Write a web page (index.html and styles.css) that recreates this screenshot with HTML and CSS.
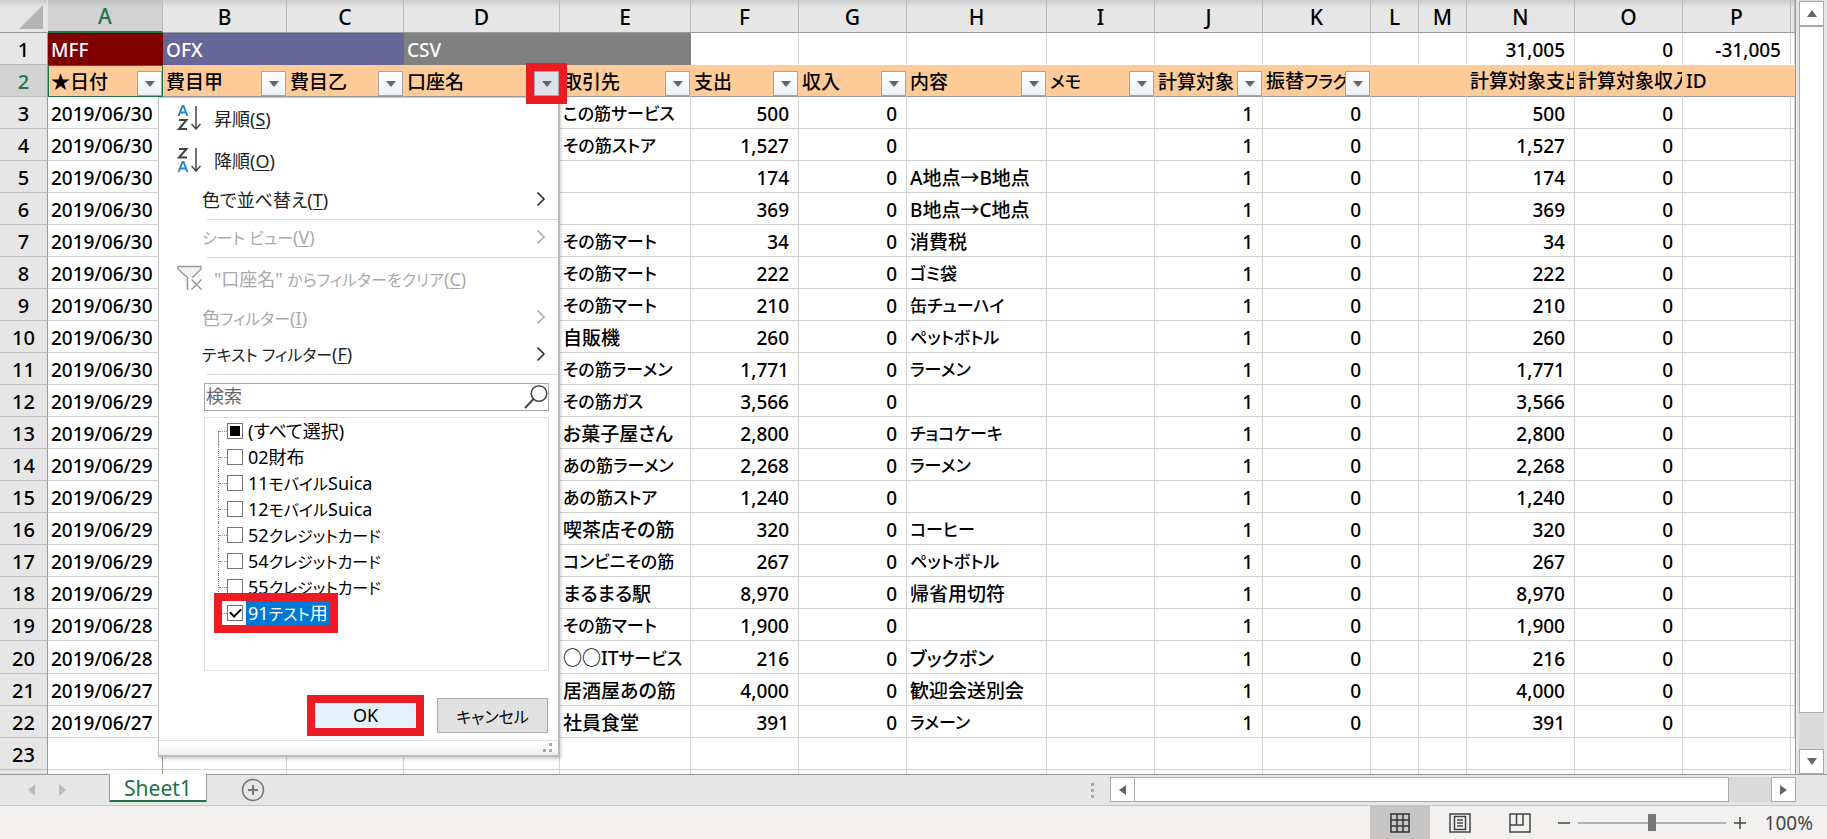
FILE: index.html
```html
<!DOCTYPE html>
<html lang="ja">
<head>
<meta charset="utf-8">
<title>Sheet1</title>
<link rel="stylesheet" href="styles.css">
</head>
<body>
<svg class="defs" aria-hidden="true">
  <symbol id="chev" viewBox="0 0 10 16"><path d="M1.500 1.500 8 8 1.500 14.500" fill="none" stroke="currentColor" stroke-width="1.500"/></symbol>
  <symbol id="az-arrow" viewBox="0 0 10 24"><path d="M5 0V23M0.500 18 5 23 9.500 18" fill="none" stroke="#444" stroke-width="1.500"/></symbol>
</svg>
<main class="workspace">
  <div class="sheet">
    <table class="grid">
      <colgroup><col class="w-row"><col class="w-a"><col class="w-b"><col class="w-c"><col class="w-d"><col class="w-e"><col class="w-m"><col class="w-m"><col class="w-h"><col class="w-m"><col class="w-m"><col class="w-m"><col class="w-s"><col class="w-s"><col class="w-m"><col class="w-m"><col class="w-m"><col></colgroup>
      <thead>
        <tr><th class="corner"><svg width="26" height="26" viewBox="0 0 26 26"><path d="M25 1V25H1Z" fill="#b4b4b4"/></svg></th><th class="active">A</th><th>B</th><th>C</th><th>D</th><th>E</th><th>F</th><th>G</th><th>H</th><th>I</th><th>J</th><th>K</th><th>L</th><th>M</th><th>N</th><th>O</th><th>P</th><th></th></tr>
      </thead>
      <tbody>
        <tr class="groups"><th>1</th><td class="mff">MFF</td><td class="ofx">OFX</td><td class="ofx"></td><td class="csv">CSV</td><td class="csv"></td><td></td><td></td><td></td><td></td><td></td><td></td><td></td><td></td><td>31,005</td><td>0</td><td>-31,005</td><td></td></tr>
        <tr class="fields"><th class="active">2</th>
          <td class="current"><div class="field"><span>★日付</span><button class="drop" aria-label="★日付"></button></div></td>
          <td><div class="field"><span>費目甲</span><button class="drop" aria-label="費目甲"></button></div></td>
          <td><div class="field"><span>費目乙</span><button class="drop" aria-label="費目乙"></button></div></td>
          <td><div class="field"><span>口座名</span><button class="drop open" aria-label="口座名"></button></div></td>
          <td><div class="field"><span>取引先</span><button class="drop" aria-label="取引先"></button></div></td>
          <td><div class="field"><span>支出</span><button class="drop" aria-label="支出"></button></div></td>
          <td><div class="field"><span>収入</span><button class="drop" aria-label="収入"></button></div></td>
          <td><div class="field"><span>内容</span><button class="drop" aria-label="内容"></button></div></td>
          <td><div class="field"><span class="kana">メモ</span><button class="drop" aria-label="メモ"></button></div></td>
          <td><div class="field"><span>計算対象</span><button class="drop" aria-label="計算対象"></button></div></td>
          <td><div class="field"><span>振替<small>フラグ</small></span><button class="drop" aria-label="振替フラグ"></button></div></td>
          <td></td><td></td><td>計算対象支出</td><td>計算対象収入</td><td>ID</td><td></td></tr>
        <tr><th>3<td>2019/06/30<td><td><td><td class="kana">この筋サービス<td>500<td>0<td><td><td>1<td>0<td><td><td>500<td>0<td><td></tr>
        <tr><th>4<td>2019/06/30<td><td><td><td class="kana">その筋ストア<td>1,527<td>0<td><td><td>1<td>0<td><td><td>1,527<td>0<td><td></tr>
        <tr><th>5<td>2019/06/30<td><td><td><td><td>174<td>0<td>A地点→B地点<td><td>1<td>0<td><td><td>174<td>0<td><td></tr>
        <tr><th>6<td>2019/06/30<td><td><td><td><td>369<td>0<td>B地点→C地点<td><td>1<td>0<td><td><td>369<td>0<td><td></tr>
        <tr><th>7<td>2019/06/30<td><td><td><td class="kana">その筋マート<td>34<td>0<td>消費税<td><td>1<td>0<td><td><td>34<td>0<td><td></tr>
        <tr><th>8<td>2019/06/30<td><td><td><td class="kana">その筋マート<td>222<td>0<td class="kana">ゴミ袋<td><td>1<td>0<td><td><td>222<td>0<td><td></tr>
        <tr><th>9<td>2019/06/30<td><td><td><td class="kana">その筋マート<td>210<td>0<td class="kana">缶チューハイ<td><td>1<td>0<td><td><td>210<td>0<td><td></tr>
        <tr><th>10<td>2019/06/30<td><td><td><td>自販機<td>260<td>0<td class="kana">ペットボトル<td><td>1<td>0<td><td><td>260<td>0<td><td></tr>
        <tr><th>11<td>2019/06/30<td><td><td><td class="kana">その筋ラーメン<td>1,771<td>0<td class="kana">ラーメン<td><td>1<td>0<td><td><td>1,771<td>0<td><td></tr>
        <tr><th>12<td>2019/06/29<td><td><td><td class="kana">その筋ガス<td>3,566<td>0<td><td><td>1<td>0<td><td><td>3,566<td>0<td><td></tr>
        <tr><th>13<td>2019/06/29<td><td><td><td>お菓子屋さん<td>2,800<td>0<td class="kana">チョコケーキ<td><td>1<td>0<td><td><td>2,800<td>0<td><td></tr>
        <tr><th>14<td>2019/06/29<td><td><td><td class="kana">あの筋ラーメン<td>2,268<td>0<td class="kana">ラーメン<td><td>1<td>0<td><td><td>2,268<td>0<td><td></tr>
        <tr><th>15<td>2019/06/29<td><td><td><td class="kana">あの筋ストア<td>1,240<td>0<td><td><td>1<td>0<td><td><td>1,240<td>0<td><td></tr>
        <tr><th>16<td>2019/06/29<td><td><td><td>喫茶店その筋<td>320<td>0<td class="kana">コーヒー<td><td>1<td>0<td><td><td>320<td>0<td><td></tr>
        <tr><th>17<td>2019/06/29<td><td><td><td class="kana">コンビニその筋<td>267<td>0<td class="kana">ペットボトル<td><td>1<td>0<td><td><td>267<td>0<td><td></tr>
        <tr><th>18<td>2019/06/29<td><td><td><td>まるまる駅<td>8,970<td>0<td>帰省用切符<td><td>1<td>0<td><td><td>8,970<td>0<td><td></tr>
        <tr><th>19<td>2019/06/28<td><td><td><td class="kana">その筋マート<td>1,900<td>0<td><td><td>1<td>0<td><td><td>1,900<td>0<td><td></tr>
        <tr><th>20<td>2019/06/28<td><td><td><td>○○IT<small>サービス</small><td>216<td>0<td>ブックボン<td><td>1<td>0<td><td><td>216<td>0<td><td></tr>
        <tr><th>21<td>2019/06/27<td><td><td><td>居酒屋あの筋<td>4,000<td>0<td>歓迎会送別会<td><td>1<td>0<td><td><td>4,000<td>0<td><td></tr>
        <tr><th>22<td>2019/06/27<td><td><td><td>社員食堂<td>391<td>0<td class="kana">ラメーン<td><td>1<td>0<td><td><td>391<td>0<td><td></tr>
        <tr><th>23<td><td><td><td><td><td><td><td><td><td><td><td><td><td><td><td></tr>
        <tr><th><td><td><td><td><td><td><td><td><td><td><td><td><td><td><td><td></tr>
      </tbody>
    </table>

    <section class="menu">
      <button class="item tall"><svg class="icon" width="26" height="26" viewBox="0 0 26 26"><path d="M1.500 11 5.500 1h1L10.500 11M3 7.500h6" fill="none" stroke="#2b88c8" stroke-width="2"/><path d="M2 15h7.500L2 24h8" fill="none" stroke="#444" stroke-width="2"/><use href="#az-arrow" x="14" y="1" width="10" height="24"/></svg><span>昇順(<u>S</u>)</span></button>
      <button class="item tall"><svg class="icon" width="26" height="26" viewBox="0 0 26 26"><path d="M2 2h7.500L2 10.500h8" fill="none" stroke="#444" stroke-width="2"/><path d="M1.500 25 5.500 15h1L10.500 25M3 21.500h6" fill="none" stroke="#2b88c8" stroke-width="2"/><use href="#az-arrow" x="14" y="1" width="10" height="24"/></svg><span>降順(<u>O</u>)</span></button>
      <button class="item"><span>色で並べ替え(<u>T</u>)</span><svg class="chev" width="10" height="16"><use href="#chev"/></svg></button>
      <hr>
      <button class="item" disabled><span><small>シート ビュー</small>(<u>V</u>)</span><svg class="chev" width="10" height="16"><use href="#chev"/></svg></button>
      <hr>
      <button class="item tall" disabled><svg class="icon" width="26" height="26" viewBox="0 0 26 26"><path d="M1 1.500H24V4L15.500 12.500V13M10.500 25V12.500L1 4V1.500" fill="#f2f2f2" stroke="#999" stroke-width="1.500"/><path d="M14.500 14.500 24.500 24.500M24.500 14.500 14.500 24.500" stroke="#999" stroke-width="1.500"/></svg><span>"口座名" <small>からフィルターをクリア</small>(<u>C</u>)</span></button>
      <button class="item" disabled><span>色<small>フィルター</small>(<u>I</u>)</span><svg class="chev" width="10" height="16"><use href="#chev"/></svg></button>
      <button class="item"><span><small>テキスト フィルター</small>(<u>F</u>)</span><svg class="chev" width="10" height="16"><use href="#chev"/></svg></button>
      <hr>
      <div class="panel">
        <div class="search">
          <input type="text" placeholder="検索" aria-label="検索">
          <svg width="24" height="26" viewBox="0 0 24 26"><circle cx="15" cy="9.500" r="7.800" fill="none" stroke="#444" stroke-width="1.500"/><path d="M9.500 15 1 24" stroke="#444" stroke-width="2"/></svg>
        </div>
        <div class="tree">
          <label><input type="checkbox" class="mixed"><span>(すべて選択)</span></label>
          <label><input type="checkbox"><span>02財布</span></label>
          <label><input type="checkbox"><span>11<small>モバイル</small>Suica</span></label>
          <label><input type="checkbox"><span>12<small>モバイル</small>Suica</span></label>
          <label><input type="checkbox"><span>52<small>クレジットカード</small></span></label>
          <label><input type="checkbox"><span>54<small>クレジットカード</small></span></label>
          <label><input type="checkbox"><span>55<small>クレジットカード</small></span></label>
          <label class="marked"><input type="checkbox" checked><span>91<small>テスト</small>用</span></label>
        </div>
        <div class="actions"><button class="ok">OK</button><button class="cancel"><small>キャンセル</small></button></div>
      </div>
      <div class="grip"><svg width="10" height="10" viewBox="0 0 10 10"><path d="M6 0h3v3H6zM0 6h3v3H0zM6 6h3v3H6z" fill="#aaa"/></svg></div>
    </section>
  </div>
  <div class="vscroll">
    <button aria-label="上"><svg width="10" height="7"><path d="M5 0 10 7H0Z" fill="#666"/></svg></button>
    <div class="vthumb"></div><div class="vtrack"></div>
    <button aria-label="下"><svg width="10" height="7"><path d="M0 0H10L5 7Z" fill="#666"/></svg></button>
  </div>
</main>
<nav class="tabs">
  <button class="step" aria-label="前"><svg width="7" height="12"><path d="M7 0V12L0 6Z" fill="#bbb"/></svg></button>
  <button class="step" aria-label="次"><svg width="7" height="12"><path d="M0 0V12L7 6Z" fill="#bbb"/></svg></button>
  <button class="tab">Sheet1</button>
  <button class="add" aria-label="追加"><svg width="24" height="24" viewBox="0 0 24 24"><circle cx="12" cy="12" r="10.500" fill="none" stroke="#777" stroke-width="1.500"/><path d="M7 12H17M12 7V17" stroke="#777" stroke-width="2"/></svg></button>
  <svg class="dots" width="4" height="16"><path d="M0 0h3v3H0zM0 6h3v3H0zM0 12h3v3H0z" fill="#aaa"/></svg>
  <div class="hscroll">
    <button aria-label="左"><svg width="7" height="10"><path d="M7 0V10L0 5Z" fill="#666"/></svg></button>
    <div class="hthumb"></div><div class="htrack"></div>
    <button aria-label="右"><svg width="7" height="10"><path d="M0 0V10L7 5Z" fill="#666"/></svg></button>
  </div>
</nav>
<footer class="status">
  <button class="view on" aria-label="標準"><svg width="20" height="20" viewBox="0 0 20 20"><path d="M1 1H19V19H1ZM7 1V19M13 1V19M1 7H19M1 13H19" fill="none" stroke="#333" stroke-width="1.500"/></svg></button>
  <button class="view" aria-label="ページ レイアウト"><svg width="22" height="20" viewBox="0 0 22 20"><path d="M1 1H21V19H1ZM5.500 3.500H16.500V16.500H5.500ZM8 7H14M8 10H14M8 13H14" fill="none" stroke="#444" stroke-width="1.500"/></svg></button>
  <button class="view" aria-label="改ページ"><svg width="22" height="20" viewBox="0 0 22 20"><path d="M1 1H21V19H1ZM7.500 1V12M1 12H14V1" fill="none" stroke="#444" stroke-width="1.500"/></svg></button>
  <button class="zoom" aria-label="縮小"><svg width="12" height="12"><path d="M0 6H12" stroke="#444" stroke-width="1.500"/></svg></button>
  <input class="slider" type="range" min="0" max="100" value="50" aria-label="ズーム">
  <button class="zoom" aria-label="拡大"><svg width="12" height="12"><path d="M0 6H12M6 0V12" stroke="#444" stroke-width="1.500"/></svg></button>
  <span class="pct">100%</span>
</footer>
</body>
</html>
```
FILE: styles.css
```css
* { box-sizing: border-box; }
html, body { height: 100%; }
body {
  margin: 0; display: flex; flex-direction: column; overflow: hidden;
  background: #e6e6e6; color: #000;
  font-family: "Noto Sans", "Noto Sans CJK JP", sans-serif;
  font-size: 18px; font-feature-settings: "palt";
}
button, input { font: inherit; font-feature-settings: inherit; color: inherit; margin: 0; padding: 0; }
button { border: 0; background: none; }
small { font-size: 16px; }
.defs { position: absolute; width: 0; height: 0; }

.workspace { flex: 1; min-height: 0; display: flex; gap: 3px; padding-right: 3px; }
.sheet { flex: 1; min-width: 0; position: relative; overflow: hidden; background: #fff; border-right: 1px solid #999; }

.grid { width: 100%; table-layout: fixed; border-collapse: separate; border-spacing: 0; font-size: 19px; font-weight: 500; }
.w-row { width: 48px; } .w-a { width: 115px; } .w-b { width: 124px; } .w-c { width: 117px; }
.w-d { width: 156px; } .w-e { width: 131px; } .w-m { width: 108px; } .w-h { width: 140px; } .w-s { width: 48px; }
.grid td, .grid th { height: 32px; padding: 3px 0 0; line-height: 28px; white-space: nowrap; overflow: hidden; }
.grid td { padding-left: 3px; border-right: 1px solid #d4d4d4; border-bottom: 1px solid #d0d0d0; }
.grid th { background: #e6e6e6; font-weight: 500; font-size: 20px; border-right: 1px solid #999; border-bottom: 1px solid #bbb; }
.grid thead th { height: 33px; padding-top: 1px; line-height: 30px; font-size: 21px; border-right-color: #bbb; border-bottom-color: #999; background: linear-gradient(#cccccc, #e6e6e6 7px); }
.grid thead th.active { background: linear-gradient(#bdbdbd, #d2d2d2 7px); color: #217346; border-bottom: 2px solid #217346; }
.grid thead .corner { padding-right: 3px; border-right-color: #e6e6e6; }
.corner svg { display: block; margin-left: auto; }
.grid tbody th.active { background: #d2d2d2; color: #217346; }
.grid td:nth-child(7), .grid td:nth-child(8), .grid td:nth-child(11), .grid td:nth-child(12),
.grid td:nth-child(15), .grid td:nth-child(16), .grid td:nth-child(17) { text-align: right; padding-left: 0; padding-right: 9px; }
.grid td:nth-child(2) { border-right-color: #999; }
.grid .kana, .grid small { font-size: 17px; }
.grid .groups td { border-bottom-color: #fff; }
.grid .groups .mff { background: #800000; border-color: #800000; color: #fff; }
.grid .groups .ofx { background: #666699; border-color: #666699; color: #fff; }
.grid .groups .csv { background: #808080; border-color: #808080; color: #fff; }
.grid .fields td { background: #ffcc99; border-right-color: #ffcc99; border-bottom-color: #999; text-align: left; padding: 0 0 0 3px; }
.grid .fields .current { border-right-color: #217346; border-bottom-color: #217346; box-shadow: inset 1px 1px #217346; }
.field { display: flex; align-items: flex-end; height: 31px; }
.field span { flex: 1; min-width: 0; overflow: hidden; }
.drop {
  flex: none; width: 25px; height: 25px; border: 1px solid #a0a6ae;
  background: linear-gradient(#fff, #eef1f7); display: grid; place-items: center;
}
.drop::before { content: ""; border: 5px solid transparent; border-top: 6px solid #666; border-bottom: 0; }
.drop.open { background: #dde1ea; outline: 8px solid #ed1c24; }
.grid .fields td:has(.open) { overflow: visible; position: relative; z-index: 3; }

.menu {
  position: absolute; left: 158px; top: 97px; width: 402px; z-index: 2;
  background: #fff; border: 1px solid #c6c6c6; border-right: 2px solid #bbb; border-bottom: 2px solid #bbb;
  box-shadow: 1px 2px 3px #0003; color: #222;
}
.item { display: flex; align-items: center; width: 100%; height: 37px; padding: 0 12px 0 43px; text-align: left; }
.item.tall { height: 42px; padding-left: 18px; gap: 11px; }
.item span { padding-bottom: 3px; }
.item:disabled { color: #aaa; }
.item u { text-underline-offset: 2px; text-decoration-thickness: 1px; }
.chev { margin: 0 0 3px auto; }
.icon { flex: none; margin-bottom: 2px; }
.menu hr { height: 1px; border: 0; margin: 0 0 0 48px; background: #ddd; }
.panel { padding: 8px 9px 7px 45px; }
.search { display: flex; align-items: center; height: 28px; border: 1px solid #aaa; }
.search input { flex: 1; min-width: 0; height: 26px; border: 0; outline: 0; padding: 0 1px 2px; background: none; }
.search input::placeholder { color: #666; opacity: 1; }
.tree { height: 254px; margin: 6px 0 27px; padding: 0 0 0 13px; border: 1px solid #dfe3e8; color: #000; }
.tree label { display: flex; align-items: center; width: max-content; height: 26px; border-left: 1px dotted #888; }
.tree label:first-child { border-image: linear-gradient(transparent 50%, #999 50%) 1; }
.tree label::before { content: ""; width: 8px; border-top: 1px dotted #888; }
.tree input { appearance: none; width: 16px; height: 16px; border: 1px solid #777; background: #fff; display: grid; place-items: center; }
.tree .mixed::before { content: ""; width: 10px; height: 10px; background: #000; }
.tree input:checked::before { content: ""; width: 9px; height: 5px; border: solid #000; border-width: 0 0 2px 2px; transform: rotate(-45deg); margin-bottom: 3px; }
.tree span { padding: 0 2px; margin-left: 3px; line-height: 24px; }
.tree .marked { outline: 8px solid #ed1c24; margin: 1px 0 0 4px; border: 0; background: #fff; position: relative; height: 24px; }
.tree .marked::before { width: 5px; }
.marked span { background: #0078d7; color: #fff; }
.actions { display: flex; justify-content: flex-end; align-items: center; gap: 21px; padding-right: 1px; }
.actions button { color: #000; }
.ok { width: 101px; height: 25px; line-height: 25px; background: #e5f1fb; outline: 8px solid #ed1c24; }
.cancel { width: 111px; height: 35px; background: #e1e1e1; border: 1px solid #adadad; }
.grip { display: flex; justify-content: flex-end; align-items: center; height: 15px; padding-right: 5px; border-top: 1px solid #dce3ea; background: linear-gradient(#fff 30%, #eceef1); }

.vscroll { width: 25px; padding-top: 1px; display: flex; flex-direction: column; background: #dadada; }
.vscroll button, .hscroll button { flex: none; width: 25px; height: 25px; background: #fff; border: 1px solid #ababab; display: grid; place-items: center; }
.vthumb { flex: 19; background: #fff; border: 1px solid #ababab; }
.vtrack { flex: 1; }

.tabs { height: 32px; display: flex; align-items: flex-start; border-top: 1px solid #999; border-bottom: 1px solid #c6c6c6; padding-right: 31px; background: #e6e6e6; }
.step { width: 31px; height: 30px; display: grid; place-items: center end; }
.step:first-child { width: 35px; }
.tab { width: 98px; height: 28px; margin: -1px 0 0 43px; background: #fff; color: #217346; font-size: 21px; line-height: 26px; border: solid #999; border-width: 0 1px; box-shadow: inset 0 -2px #217346; }
.add { width: 24px; height: 24px; margin: 3px auto 0 34px; }
.add svg { display: block; }
.dots { margin: 8px 15px 0 0; }
.hscroll { width: 686px; margin-top: 2px; display: flex; background: #dadada; }
.hthumb { flex: 14; background: #fff; border: 1px solid #ababab; border-left: 0; }
.htrack { flex: 1; }

.status { height: 33px; display: flex; align-items: center; justify-content: flex-end; padding-right: 14px; background: #f3f1ef; color: #444; }
.view { width: 60px; height: 33px; display: grid; place-items: center; }
.view.on { background: #c8c6c4; }
.zoom { width: 12px; height: 12px; display: grid; margin-left: 8px; }
.zoom svg { display: block; }
.slider { appearance: none; width: 148px; height: 18px; margin: 0 0 0 8px; background: linear-gradient(#b0b0b0, #b0b0b0) center / 100% 2px no-repeat; }
.slider::-webkit-slider-thumb { appearance: none; width: 8px; height: 17px; background: #777; }
.pct { margin-left: 19px; font-size: 19px; }
```
